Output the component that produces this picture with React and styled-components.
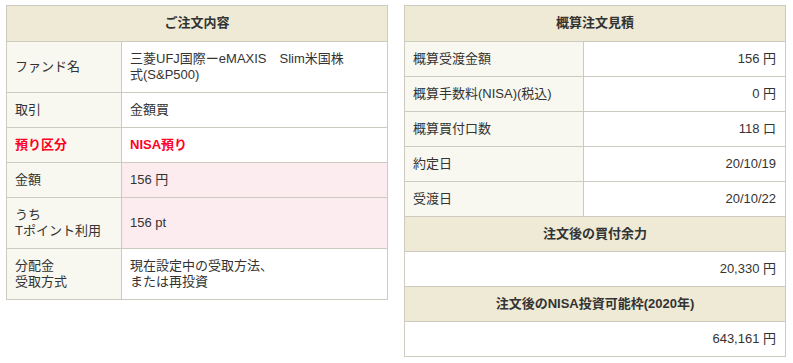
import React from "react";
import styled, { createGlobalStyle } from "styled-components";

const Global = createGlobalStyle`
  html, body { margin: 0; padding: 0; background: #fff; }
  body {
    font-family: "Liberation Sans", "Noto Sans CJK JP", sans-serif;
    font-size: 13px;
    color: #333;
  }
`;

const Page = styled.div`
  display: flex;
  align-items: flex-start;
  gap: 16px;
  padding: 5px 6px;
`;

const Table = styled.table`
  width: 381px;
  border-collapse: collapse;
  border: 1px solid #cdcbc0;
  table-layout: fixed;
`;

const Col = styled.col`
  width: ${(p) => p.$w}px;
`;

const Head = styled.th`
  background: #eeead6;
  border: 1px solid #cdcbc0;
  font-weight: bold;
  text-align: center;
  padding: 9px 8px ${(p) => (p.$tall ? "10px" : "9px")};
  line-height: 16px;
  color: #333;
`;

const Label = styled.td`
  background: #f8f8f0;
  border: 1px solid #cdcbc0;
  padding: 9px 8px;
  line-height: 16px;
  vertical-align: middle;
  white-space: nowrap;
  color: ${(p) => (p.$red ? "#ff0022" : "#333")};
  font-weight: ${(p) => (p.$red ? "bold" : "normal")};
`;

const Value = styled.td`
  background: ${(p) => (p.$pink ? "#fdecef" : "#fff")};
  border: 1px solid #cdcbc0;
  padding: 9px 8px;
  line-height: 16px;
  vertical-align: middle;
  white-space: nowrap;
  text-align: ${(p) => (p.$right ? "right" : "left")};
  color: ${(p) => (p.$red ? "#ff0022" : "#333")};
  font-weight: ${(p) => (p.$red ? "bold" : "normal")};
  padding-right: ${(p) => (p.$right ? "9px" : "8px")};
`;

const order = [
  { label: "ファンド名", value: ["三菱UFJ国際ーeMAXIS　Slim米国株", "式(S&P500)"] },
  { label: "取引", value: ["金額買"] },
  { label: "預り区分", value: ["NISA預り"], red: true },
  { label: "金額", value: ["156 円"], pink: true },
  { label: ["うち", "Tポイント利用"], value: ["156 pt"], pink: true },
  { label: ["分配金", "受取方式"], value: ["現在設定中の受取方法、", "または再投資"] },
];

const estimate = [
  ["概算受渡金額", "156 円"],
  ["概算手数料(NISA)(税込)", "0 円"],
  ["概算買付口数", "118 口"],
  ["約定日", "20/10/19"],
  ["受渡日", "20/10/22"],
];

const Lines = ({ v }) =>
  (Array.isArray(v) ? v : [v]).map((l, i) => (
    <React.Fragment key={i}>
      {i > 0 && <br />}
      {l}
    </React.Fragment>
  ));

export default function App() {
  return (
    <>
      <Global />
      <Page>
        <Table>
          <colgroup>
            <Col $w={115} />
            <Col $w={266} />
          </colgroup>
          <tbody>
            <tr>
              <Head colSpan={2} $tall>ご注文内容</Head>
            </tr>
            {order.map((r, i) => (
              <tr key={i}>
                <Label $red={r.red}>
                  <Lines v={r.label} />
                </Label>
                <Value $pink={r.pink} $red={r.red}>
                  <Lines v={r.value} />
                </Value>
              </tr>
            ))}
          </tbody>
        </Table>
        <Table>
          <colgroup>
            <Col $w={179} />
            <Col $w={202} />
          </colgroup>
          <tbody>
            <tr>
              <Head colSpan={2} $tall>概算注文見積</Head>
            </tr>
            {estimate.map(([l, v], i) => (
              <tr key={i}>
                <Label>{l}</Label>
                <Value $right>{v}</Value>
              </tr>
            ))}
            <tr>
              <Head colSpan={2}>注文後の買付余力</Head>
            </tr>
            <tr>
              <Value colSpan={2} $right>20,330 円</Value>
            </tr>
            <tr>
              <Head colSpan={2}>注文後のNISA投資可能枠(2020年)</Head>
            </tr>
            <tr>
              <Value colSpan={2} $right>643,161 円</Value>
            </tr>
          </tbody>
        </Table>
      </Page>
    </>
  );
}
